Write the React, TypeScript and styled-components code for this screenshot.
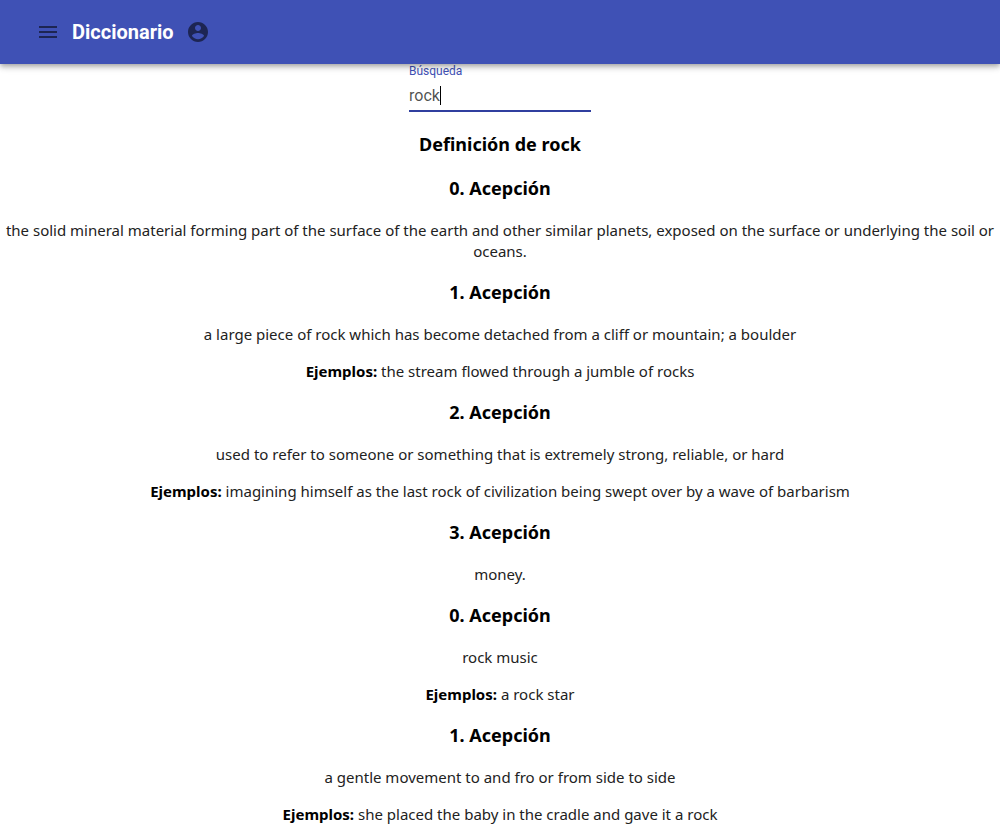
import React, { useState } from 'react';
import styled, { createGlobalStyle } from 'styled-components';

const Global = createGlobalStyle`
  * { box-sizing: border-box; }
  body {
    margin: 0;
    background: #fff;
    color: #000;
    font-family: "Noto Sans", sans-serif;
    font-size: 15px;
  }
`;

const AppBar = styled.header`
  position: relative;
  z-index: 1;
  display: flex;
  align-items: center;
  height: 64px;
  padding: 0 24px;
  background: #3f51b5;
  color: rgba(0, 0, 0, 0.54);
  box-shadow: 0 2px 4px -1px rgba(0, 0, 0, 0.2), 0 4px 5px 0 rgba(0, 0, 0, 0.14),
    0 1px 10px 0 rgba(0, 0, 0, 0.12);
`;

const IconButton = styled.button`
  display: flex;
  padding: 12px;
  border: 0;
  background: transparent;
  color: inherit;
  cursor: pointer;
`;

const Icon = styled.svg`
  width: 24px;
  height: 24px;
  fill: currentColor;
`;

const Title = styled.h1`
  margin: 0;
  color: #fff;
  font: 700 20px/32px Roboto, sans-serif;
`;

const SearchForm = styled.form`
  display: flex;
  justify-content: center;
`;

const Field = styled.div`
  display: flex;
  flex-direction: column;
  width: 182px;
  border-bottom: 2px solid #303f9f;
  font-family: Roboto, sans-serif;
`;

const Label = styled.label`
  color: #3f51b5;
  font-size: 12px;
  line-height: 14px;
`;

const InputRow = styled.div`
  position: relative;
`;

const Input = styled.input`
  display: block;
  width: 100%;
  height: 32px;
  padding: 7px 0 5px;
  border: 0;
  outline: 0;
  background: transparent;
  color: rgba(0, 0, 0, 0.7);
  caret-color: transparent;
  font: 400 16px/20px Roboto, sans-serif;
`;

const CaretTrack = styled.span`
  position: absolute;
  top: 8px;
  left: 0;
  height: 19px;
  border-right: 1px solid #000;
  color: transparent;
  font-size: 16px;
  pointer-events: none;

  &::before {
    content: attr(data-value);
    white-space: pre;
  }
`;

const Results = styled.main`
  padding: 2px 4px 0;
  text-align: center;
`;

const Heading = styled.h2`
  margin: 18px 0 19px;
  font-size: 18px;
  line-height: 25px;
  font-weight: 700;
`;

const Text = styled.p`
  margin: 16px 0;
  color: #222;
  line-height: 21px;
`;

const Tag = styled.b`
  color: #000;
  font-weight: 700;
`;

const senses = [
  {
    n: 0,
    text: 'the solid mineral material forming part of the surface of the earth and other similar planets, exposed on the surface or underlying the soil or oceans.',
  },
  {
    n: 1,
    text: 'a large piece of rock which has become detached from a cliff or mountain; a boulder',
    example: 'the stream flowed through a jumble of rocks',
  },
  {
    n: 2,
    text: 'used to refer to someone or something that is extremely strong, reliable, or hard',
    example: 'imagining himself as the last rock of civilization being swept over by a wave of barbarism',
  },
  { n: 3, text: 'money.' },
  { n: 0, text: 'rock music', example: 'a rock star' },
  {
    n: 1,
    text: 'a gentle movement to and fro or from side to side',
    example: 'she placed the baby in the cradle and gave it a rock',
  },
];

export default function App() {
  const [query, setQuery] = useState('rock');
  return (
    <>
      <Global />
      <AppBar>
        <IconButton aria-label="Menú">
          <Icon viewBox="0 0 24 24">
            <path d="M3 18h18v-2H3v2zm0-5h18v-2H3v2zm0-7v2h18V6H3z" />
          </Icon>
        </IconButton>
        <Title>Diccionario</Title>
        <IconButton aria-label="Cuenta">
          <Icon viewBox="0 0 24 24">
            <path d="M12 2C6.480 2 2 6.480 2 12s4.480 10 10 10 10-4.480 10-10S17.520 2 12 2zm0 3c1.660 0 3 1.340 3 3s-1.340 3-3 3-3-1.340-3-3 1.340-3 3-3zm0 14.200c-2.500 0-4.710-1.280-6-3.220.030-1.990 4-3.080 6-3.080 1.990 0 5.970 1.090 6 3.080-1.290 1.940-3.500 3.220-6 3.220z" />
          </Icon>
        </IconButton>
      </AppBar>
      <SearchForm onSubmit={(e) => e.preventDefault()}>
        <Field>
          <Label htmlFor="search">Búsqueda</Label>
          <InputRow>
            <Input id="search" autoFocus value={query} onChange={(e) => setQuery(e.target.value)} />
            <CaretTrack aria-hidden="true" data-value={query} />
          </InputRow>
        </Field>
      </SearchForm>
      <Results>
        <Heading>Definición de rock</Heading>
        {senses.map((s, i) => (
          <section key={i}>
            <Heading as="h3">{s.n}. Acepción</Heading>
            <Text>{s.text}</Text>
            {s.example && (
              <Text>
                <Tag>Ejemplos:</Tag> {s.example}
              </Text>
            )}
          </section>
        ))}
      </Results>
    </>
  );
}
